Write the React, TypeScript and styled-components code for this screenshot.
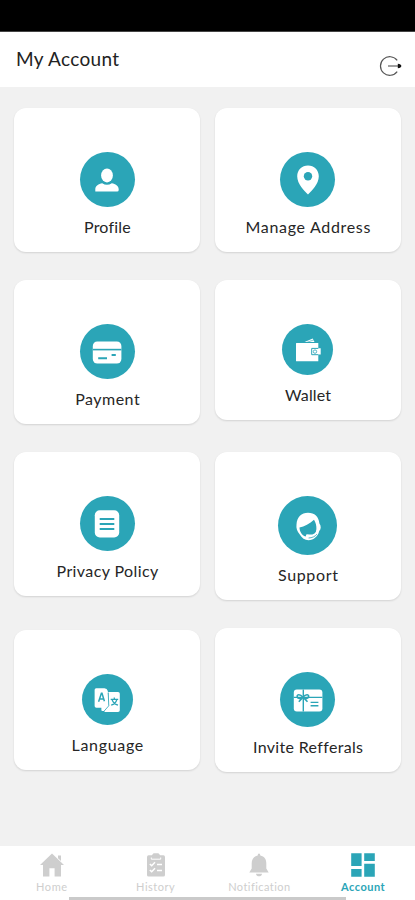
import React from "react";
import styled, { createGlobalStyle } from "styled-components";

const teal = "#2ba5b7";

const GlobalStyle = createGlobalStyle`
  * { box-sizing: border-box; }
  body { margin: 0; background: #f1f1f1; font-family: Lato, "Open Sans", sans-serif; }
`;

const Screen = styled.div`
  display: flex;
  flex-direction: column;
  width: 415px;
  height: 900px;
  overflow: hidden;
  background: #f1f1f1;
`;

const StatusBar = styled.div`
  height: 32px;
  flex: none;
  background: #000;
  border-bottom: 1px solid #444;
`;

const Header = styled.header`
  display: flex;
  justify-content: space-between;
  height: 55px;
  flex: none;
  padding: 15px 12px 0 16px;
  background: #fff;
`;

const Title = styled.h1`
  margin: 0;
  font-size: 19px;
  line-height: 24px;
  font-weight: 400;
  letter-spacing: 0.35px;
  color: #222;
`;

const LogoutButton = styled.button`
  display: flex;
  width: 24px;
  height: 24px;
  margin-top: 7px;
  padding: 0;
  border: 0;
  background: none;
`;

const Grid = styled.main`
  flex: 1;
  display: grid;
  grid-template-columns: 186px 186px;
  column-gap: 14.6px;
  row-gap: 28px;
  align-content: start;
  align-items: start;
  padding: 21px 14px 0 14.4px;
`;

const Card = styled.section<{ $centered?: boolean }>`
  display: flex;
  flex-direction: column;
  align-items: center;
  align-self: ${(p) => (p.$centered ? "center" : "start")};
  padding: 44px 0 8px;
  border-radius: 12px;
  background: #fff;
  box-shadow: 0 1px 2px rgba(0, 0, 0, 0.13);
`;

const Disc = styled.div<{ $size: number }>`
  display: flex;
  align-items: center;
  justify-content: center;
  width: ${(p) => p.$size}px;
  height: ${(p) => p.$size}px;
  border-radius: 50%;
  background: ${teal};
`;

const Label = styled.div<{ $spacing: number }>`
  margin-top: 8px;
  height: 29px;
  line-height: 24px;
  font-size: 16px;
  letter-spacing: ${(p) => p.$spacing}px;
  margin-right: -${(p) => p.$spacing}px;
  white-space: nowrap;
  color: #262626;
`;

const TabBar = styled.nav`
  display: grid;
  grid-template-columns: repeat(4, 103.75px);
  height: 51px;
  flex: none;
  background: #fff;
`;

const Tab = styled.div<{ $active?: boolean; $spacing: number }>`
  display: flex;
  flex-direction: column;
  align-items: center;
  padding-top: 6px;
  color: ${(p) => (p.$active ? teal : "#cecece")};
  font-size: 11px;
  font-weight: ${(p) => (p.$active ? 700 : 400)};
  line-height: 14px;
  letter-spacing: ${(p) => p.$spacing}px;
`;

const TabText = styled.span`
  margin-top: 2px;
`;

const HomeStrip = styled.div`
  flex: none;
  display: flex;
  justify-content: center;
  height: 3px;
  background: #fff;
`;

const HomeHandle = styled.div`
  width: 277px;
  height: 3px;
  background: #cacaca;
`;

const Svg = ({ size = 32, children }: { size?: number; children: React.ReactNode }) => (
  <svg width={size} height={size} viewBox={`0 0 ${size} ${size}`} fill="none">
    {children}
  </svg>
);

const LogoutIcon = () => (
  <Svg size={24}>
    <path d="M18.2 6.4A9.3 9.3 0 1 0 18.2 17.6" stroke="#555" strokeWidth="1.2" />
    <path d="M9 12H20" stroke="#555" strokeWidth="1.1" />
    <path d="M18.8 9.8Q22.2 10.2 22.4 12Q22.2 13.8 18.8 14.2Z" fill="#111" />
  </Svg>
);

const ProfileIcon = () => (
  <Svg>
    <ellipse cx="16" cy="11.4" rx="5.9" ry="7" fill="#fff" />
    <path d="M4.3 27.6V25.4C4.3 21.5 7.7 20 11.2 19.2Q16 22.3 20.8 19.2C24.3 20 27.7 21.5 27.7 25.4V26Q27.7 27.6 26.1 27.6Z" fill="#fff" />
  </Svg>
);

const PinIcon = () => (
  <Svg>
    <path d="M16 1.6C9.9 1.6 5.2 6.2 5.2 12.2C5.2 20 12.5 26.8 16 30.4C19.5 26.8 26.8 20 26.8 12.2C26.8 6.2 22.1 1.6 16 1.6Z" fill="#fff" />
    <circle cx="16" cy="12.3" r="4.2" fill={teal} />
  </Svg>
);

const PaymentIcon = () => (
  <Svg>
    <rect x="1.8" y="5.5" width="28.6" height="22" rx="4.5" fill="#fff" />
    <path d="M1.8 13.6H30.4" stroke={teal} strokeWidth="1.6" />
    <path d="M7.2 22.2H16M20.6 19H24.8" stroke={teal} strokeWidth="2" />
  </Svg>
);

const WalletIcon = () => (
  <Svg>
    <path d="M4.5 9H26.3V14.3H28.7V20.6H26.3V27.2H4.5Q4 27.2 4 26.7V9.5Q4 9 4.5 9Z" fill="#fff" />
    <path d="M12.6 8L20.7 4.4L22.5 8Z" fill="#fff" />
    <path d="M15 8.3L22 5.8" stroke={teal} strokeWidth=".6" />
    <path d="M26.3 14.4H19.7V20.7H26.3" stroke={teal} strokeWidth="1" />
    <circle cx="23" cy="17.6" r="1.7" stroke={teal} strokeWidth=".8" />
  </Svg>
);

const PolicyIcon = () => (
  <Svg>
    <rect x="3.8" y="2.3" width="24.4" height="27.2" rx="5" fill="#fff" />
    <path d="M8.7 11H23.3M8.7 16H23.3M8.7 21H23.3" stroke={teal} strokeWidth="1.8" />
  </Svg>
);

const SupportIcon = () => (
  <Svg>
    <path d="M7.6 24.2C5.2 21.2 4 18.4 4.5 14.5C5 7.2 9.4 2.8 16 2.8C22.6 2.8 26.8 6.8 27.4 13.4C29.2 15.6 29.2 19 27.2 21C26 26.4 21.7 30.2 16.4 30.2C12.8 30.2 9.9 28 7.6 24.2Z" fill="#fff" />
    <path d="M7.5 17.6C12.3 16.5 17.8 14 22 9.8C23.8 12.8 24.6 16 24.4 19C24.2 22 23 24.6 20.8 25.6L14.6 24.6L13.6 26.6C9.8 25.4 7.6 21.6 7.5 17.6Z" fill={teal} />
    <path d="M15 25.3H20.6C23.2 24.6 25 22.6 25.5 20.5" stroke="#fff" strokeWidth="1.7" strokeLinecap="round" />
    <path d="M16.6 28C20 27.9 23 26.6 24.9 24.2" stroke={teal} strokeWidth=".8" />
  </Svg>
);

const LanguageIcon = () => (
  <Svg>
    <path d="M10.4 23V26Q10.4 27 11.4 27H14.8L17 23Z" fill="#fff" />
    <path d="M17.4 8H27Q28.8 8 28.8 9.8V26.2Q28.8 28 27 28H13.2L17.4 21.6Z" fill="#fff" />
    <path d="M5.2 4.3H13.5Q16.1 4.3 16.8 7L17.5 21.8Q17.5 23.8 15.5 23.8H5.4Q3.6 23.8 3.6 22V6Q3.6 4.3 5.2 4.3Z" fill="#fff" />
    <path d="M17.2 9L17.8 21.8L13.2 27" stroke={teal} strokeWidth=".8" />
    <path d="M7.6 17.8L10.4 9.3H11L13.4 17.2M8.6 15H12.7" stroke={teal} strokeWidth="1.5" />
    <path d="M19.7 15.4H27.2M23.3 13.5V15.4M25.9 15.5C25 18.3 23 20.4 20.2 21.2M21 15.5C22 18.3 24 20.4 27 21.2" stroke={teal} strokeWidth="1.3" />
  </Svg>
);

const GiftCardIcon = () => (
  <Svg>
    <rect x="1.8" y="5.5" width="28.6" height="22" rx="3" fill="#fff" />
    <path d="M11.3 5.5V27.5M1.8 13.4H30.4" stroke={teal} strokeWidth="1.4" />
    <path d="M10.9 13.3C8 9.9 4.9 10.3 5.2 12.5C5.4 15 8.5 15 10.9 13.3C13.9 9.9 16.9 10.3 16.6 12.5C16.2 15 13.5 15 10.9 13.3M10.9 13.4L6.8 17.7M11.3 13.4L15.5 17.7" stroke={teal} strokeWidth="1.6" />
    <path d="M18.6 18.4H26.4M18.6 21.8H26.4" stroke={teal} strokeWidth="1.4" />
  </Svg>
);

const HomeIcon = () => (
  <Svg size={26}>
    <path d="M13 1.5L25 13.1H22V24.5H15.6V16.2H10.4V24.5H4V13.1H1Z" fill="currentColor" />
    <path d="M19 3.5H22V9L19 6.2Z" fill="currentColor" />
  </Svg>
);

const HistoryIcon = () => (
  <Svg size={26}>
    <path d="M5.6 3.3H8.8L10.6 1.3H15.4L17.2 3.3H20.4Q22 3.3 22 5V23Q22 24.6 20.4 24.6H5.6Q4 24.6 4 23V5Q4 3.3 5.6 3.3Z" fill="currentColor" />
    <path d="M8.3 5.5V7.2H17.7V5.5" stroke="#fff" />
    <path d="M6.8 12L8.7 13.8L12 10.3M6.8 18L8.7 19.8L12 16.3M14 12.6H19M14 18.6H19" stroke="#fff" strokeWidth="1.5" />
  </Svg>
);

const BellIcon = () => (
  <Svg size={26}>
    <path d="M11.7 3.5Q11.7 1.5 13 1.5T14.3 3.5C18.5 4.2 20.3 7.5 20.3 11.2V16.5L22.7 20.5H3.3L5.7 16.5V11.2C5.7 7.5 7.5 4.2 11.7 3.5Z" fill="currentColor" />
    <path d="M10 21.7H16C15.7 25.2 10.3 25.2 10 21.7Z" fill="currentColor" />
  </Svg>
);

const DashboardIcon = () => (
  <Svg size={26}>
    <path d="M1.2 1.2H11.6V14H1.2ZM14.2 1.2H24.8V9H14.2ZM1.2 16.9H11.6V24.7H1.2ZM14.2 11.7H24.8V24.7H14.2Z" fill="currentColor" />
  </Svg>
);

const cards = [
  { label: "Profile", size: 55, spacing: 0.2, Icon: ProfileIcon },
  { label: "Manage Address", size: 55, spacing: 0.68, Icon: PinIcon },
  { label: "Payment", size: 55, spacing: 0.5, Icon: PaymentIcon },
  { label: "Wallet", size: 51, spacing: 0.1, Icon: WalletIcon },
  { label: "Privacy Policy", size: 55, spacing: 0.4, Icon: PolicyIcon },
  { label: "Support", size: 59, spacing: 0.65, Icon: SupportIcon },
  { label: "Language", size: 51, spacing: 0.7, Icon: LanguageIcon, centered: true },
  { label: "Invite Refferals", size: 55, spacing: 0.33, Icon: GiftCardIcon, centered: true },
];

const tabs = [
  { label: "Home", spacing: 0.6, Icon: HomeIcon },
  { label: "History", spacing: 0.5, Icon: HistoryIcon },
  { label: "Notification", spacing: 0.45, Icon: BellIcon },
  { label: "Account", spacing: 0.5, Icon: DashboardIcon, active: true },
];

export default function App() {
  return (
    <Screen>
      <GlobalStyle />
      <StatusBar />
      <Header>
        <Title>My Account</Title>
        <LogoutButton aria-label="Log out">
          <LogoutIcon />
        </LogoutButton>
      </Header>
      <Grid>
        {cards.map(({ label, size, spacing, Icon, centered }) => (
          <Card key={label} $centered={centered}>
            <Disc $size={size}>
              <Icon />
            </Disc>
            <Label $spacing={spacing}>{label}</Label>
          </Card>
        ))}
      </Grid>
      <TabBar>
        {tabs.map(({ label, spacing, Icon, active }) => (
          <Tab key={label} $active={active} $spacing={spacing}>
            <Icon />
            <TabText>{label}</TabText>
          </Tab>
        ))}
      </TabBar>
      <HomeStrip>
        <HomeHandle />
      </HomeStrip>
    </Screen>
  );
}
